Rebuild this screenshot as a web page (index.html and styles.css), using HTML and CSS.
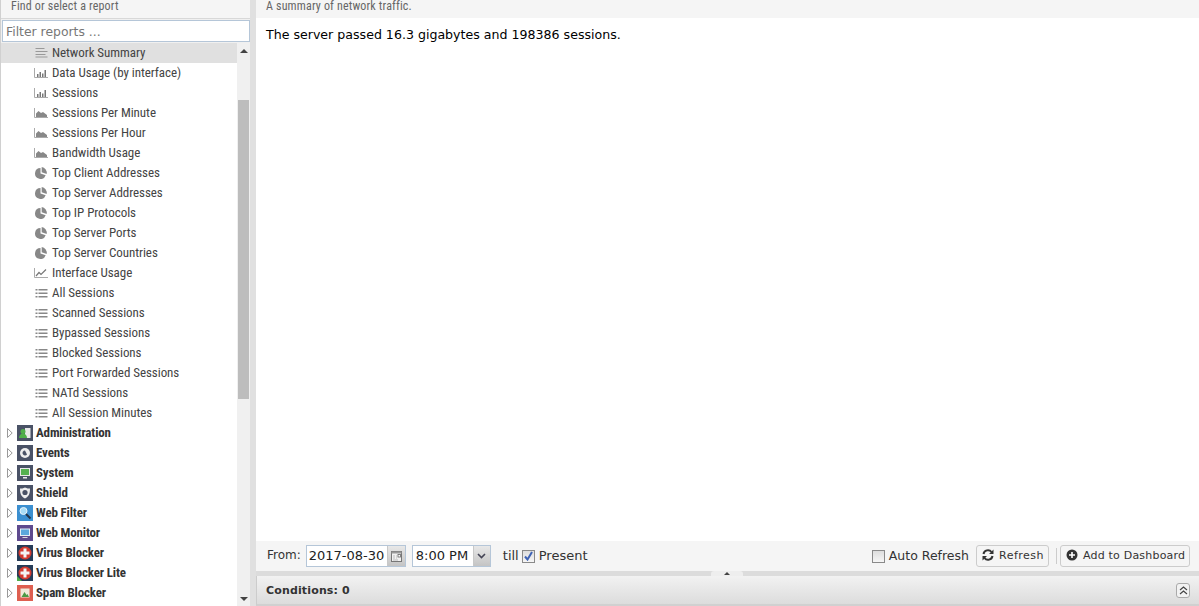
FILE: index.html
```html
<!DOCTYPE html>
<html lang="en">
<head>
<meta charset="utf-8">
<title>Reports</title>
<link rel="stylesheet" href="styles.css">
</head>
<body>
<svg class="defs" width="0" height="0" aria-hidden="true">
  <symbol id="i-lines" viewBox="0 0 14 12"><path d="M1.500 1.500h9M1.500 4.500h12M1.500 7.500h10M1.500 10h12" stroke="#999" stroke-width="1.100" fill="none"/></symbol>
  <symbol id="i-bars" viewBox="0 0 14 12"><path d="M.5 1v9.500H14" stroke="#aaa" fill="none"/><path d="M3 7h1.500v3H3zM5.500 5H7v5H5.500zM8 6.500h1.500V10H8zM10.500 3H12v7h-1.500z" fill="#777"/></symbol>
  <symbol id="i-area" viewBox="0 0 14 12"><path d="M.5 1v9.500H14" stroke="#aaa" fill="none"/><path d="M2 10V6.500l2.500-2.500 2.500 2 2-1 4 3v2z" fill="#888"/></symbol>
  <symbol id="i-pie" viewBox="0 0 12 12"><path d="M5.500 1a5.500 5.500 0 1 0 5.200 7.300L5.500 6.500z" fill="#888"/><path d="M6.700 0v5.300l5 1.700A6 6 0 0 0 6.700 0z" fill="#888"/></symbol>
  <symbol id="i-line" viewBox="0 0 14 12"><path d="M.5 1v9.500H14" stroke="#aaa" fill="none"/><path d="M2 9 5 5.500l2 2 5-5" stroke="#777" stroke-width="1.200" fill="none"/></symbol>
  <symbol id="i-list" viewBox="-1.500 -1.500 14 12"><path d="M0 .5h2v1.500H0zM0 4h2v1.500H0zM0 7.500h2V9H0z" fill="#888"/><path d="M3 1.250h9M3 4.750h9M3 8.250h9" stroke="#888" stroke-width="1.300" fill="none"/></symbol>
  <symbol id="i-tw" viewBox="0 0 6 10"><path d="M.5.500 5.200 5 .5 9.500z" fill="#fff" stroke="#999"/></symbol>
</svg>

<div class="app">
  <aside class="side">
    <div class="hint side-hint">Find or select a report</div>
    <div class="filter-wrap"><input class="filter" type="text" placeholder="Filter reports ..."></div>
    <div class="tree-wrap">
      <ul class="tree">
        <li class="row leaf selected"><svg class="ic"><use href="#i-lines"/></svg><span class="lbl">Network Summary</span></li>
        <li class="row leaf"><svg class="ic"><use href="#i-bars"/></svg><span class="lbl">Data Usage (by interface)</span></li>
        <li class="row leaf"><svg class="ic"><use href="#i-bars"/></svg><span class="lbl">Sessions</span></li>
        <li class="row leaf"><svg class="ic"><use href="#i-area"/></svg><span class="lbl">Sessions Per Minute</span></li>
        <li class="row leaf"><svg class="ic"><use href="#i-area"/></svg><span class="lbl">Sessions Per Hour</span></li>
        <li class="row leaf"><svg class="ic"><use href="#i-area"/></svg><span class="lbl">Bandwidth Usage</span></li>
        <li class="row leaf"><svg class="ic"><use href="#i-pie"/></svg><span class="lbl">Top Client Addresses</span></li>
        <li class="row leaf"><svg class="ic"><use href="#i-pie"/></svg><span class="lbl">Top Server Addresses</span></li>
        <li class="row leaf"><svg class="ic"><use href="#i-pie"/></svg><span class="lbl">Top IP Protocols</span></li>
        <li class="row leaf"><svg class="ic"><use href="#i-pie"/></svg><span class="lbl">Top Server Ports</span></li>
        <li class="row leaf"><svg class="ic"><use href="#i-pie"/></svg><span class="lbl">Top Server Countries</span></li>
        <li class="row leaf"><svg class="ic"><use href="#i-line"/></svg><span class="lbl">Interface Usage</span></li>
        <li class="row leaf"><svg class="ic"><use href="#i-list"/></svg><span class="lbl">All Sessions</span></li>
        <li class="row leaf"><svg class="ic"><use href="#i-list"/></svg><span class="lbl">Scanned Sessions</span></li>
        <li class="row leaf"><svg class="ic"><use href="#i-list"/></svg><span class="lbl">Bypassed Sessions</span></li>
        <li class="row leaf"><svg class="ic"><use href="#i-list"/></svg><span class="lbl">Blocked Sessions</span></li>
        <li class="row leaf"><svg class="ic"><use href="#i-list"/></svg><span class="lbl">Port Forwarded Sessions</span></li>
        <li class="row leaf"><svg class="ic"><use href="#i-list"/></svg><span class="lbl">NATd Sessions</span></li>
        <li class="row leaf"><svg class="ic"><use href="#i-list"/></svg><span class="lbl">All Session Minutes</span></li>
        <li class="row group"><svg class="tw"><use href="#i-tw"/></svg>
          <svg class="app-ic" viewBox="0 0 16 16"><rect width="16" height="16" fill="#4a5266"/><path d="M8 3h5.500v10H8z" fill="#e8e8e8"/><circle cx="6" cy="6.500" r="2.500" fill="#4fae4a"/><path d="M2 13c0-3 2-4.500 4-4.500S10 10 10 13z" fill="#4fae4a"/></svg><span class="lbl">Administration</span></li>
        <li class="row group"><svg class="tw"><use href="#i-tw"/></svg>
          <svg class="app-ic" viewBox="0 0 16 16"><rect width="16" height="16" fill="#4a5266"/><circle cx="8" cy="8" r="5" fill="#eee"/><path d="M8 5.500a2.500 2.500 0 1 0 2 4z" fill="#4a5266"/></svg><span class="lbl">Events</span></li>
        <li class="row group"><svg class="tw"><use href="#i-tw"/></svg>
          <svg class="app-ic" viewBox="0 0 16 16"><rect width="16" height="16" fill="#4a5266"/><rect x="3" y="3" width="10" height="8" fill="#e8e8e8"/><rect x="4" y="4" width="8" height="6" fill="#55b04f"/><path d="M6 12h4v1.500H6z" fill="#e8e8e8"/></svg><span class="lbl">System</span></li>
        <li class="row group"><svg class="tw"><use href="#i-tw"/></svg>
          <svg class="app-ic" viewBox="0 0 16 16"><rect width="16" height="16" fill="#4a5266"/><path d="M8 2.500c2 1 3.500 1 5 1 0 5-1 8-5 10-4-2-5-5-5-10 1.500 0 3 0 5-1z" fill="#eee"/><circle cx="8" cy="7.500" r="2.600" fill="#4a5266"/></svg><span class="lbl">Shield</span></li>
        <li class="row group"><svg class="tw"><use href="#i-tw"/></svg>
          <svg class="app-ic" viewBox="0 0 16 16"><rect width="16" height="16" fill="#3b8fd0"/><circle cx="6.500" cy="6" r="3.500" fill="#a9dcf5" stroke="#e8f3fa"/><path d="M9 9l4.500 4.500" stroke="#23344a" stroke-width="2"/></svg><span class="lbl">Web Filter</span></li>
        <li class="row group"><svg class="tw"><use href="#i-tw"/></svg>
          <svg class="app-ic" viewBox="0 0 16 16"><rect width="16" height="16" fill="#5e4a8e"/><rect x="3" y="3.500" width="10" height="7.500" fill="#e6eef5"/><rect x="4" y="4.500" width="8" height="5.500" fill="#5ba7dc"/><path d="M5.500 12h5v1h-5z" fill="#d8d8d8"/></svg><span class="lbl">Web Monitor</span></li>
        <li class="row group"><svg class="tw"><use href="#i-tw"/></svg>
          <svg class="app-ic" viewBox="0 0 16 16"><rect width="16" height="16" fill="#263c58"/><circle cx="8" cy="8" r="6.500" fill="#d33a2f"/><path d="M6.500 3.500h3v3h3v3h-3v3h-3v-3h-3v-3h3z" fill="#f4f4f4"/></svg><span class="lbl">Virus Blocker</span></li>
        <li class="row group"><svg class="tw"><use href="#i-tw"/></svg>
          <svg class="app-ic" viewBox="0 0 16 16"><rect width="16" height="16" fill="#263c58"/><circle cx="8" cy="8" r="6.500" fill="#d33a2f"/><path d="M6.500 3.500h3v3h3v3h-3v3h-3v-3h-3v-3h3z" fill="#f4f4f4"/><path d="M0 11l5 5H0z" fill="#4fae4a"/></svg><span class="lbl">Virus Blocker Lite</span></li>
        <li class="row group"><svg class="tw"><use href="#i-tw"/></svg>
          <svg class="app-ic" viewBox="0 0 16 16"><rect width="16" height="16" fill="#de5f50"/><rect x="3.500" y="3.500" width="9" height="9" fill="#f0ead8"/><path d="M4.500 12l3-5 2 3 1-1 1.500 3z" fill="#4c9a45"/></svg><span class="lbl">Spam Blocker</span></li>
      </ul>
      <div class="scrollbar">
        <span class="arrow arrow-up"></span>
        <span class="thumb"></span>
        <span class="arrow arrow-down"></span>
      </div>
    </div>
  </aside>

  <main class="main">
    <div class="hint main-hint">A summary of network traffic.</div>
    <div class="content">The server passed 16.3 gigabytes and 198386 sessions.</div>
    <div class="toolbar">
      <span class="from tlabel">From:</span>
      <span class="field date-field"><span class="field-value">2017-08-30</span><span class="field-btn date-btn"><svg width="11" height="11" viewBox="0 0 11 11"><rect x=".5" y=".5" width="10" height="10" fill="#f2f2f2" stroke="#777"/><path d="M.5 .5h10v2h-10z" fill="#999"/><path d="M2 5h2M5 5h1M2 7h2M5 7h1M2 9h5" stroke="#bbb"/><rect x="7" y="3.500" width="2.500" height="2.500" fill="#fff" stroke="#666" stroke-width=".8"/></svg></span></span>
      <span class="field time-field"><span class="field-value">8:00 PM</span><span class="field-btn"><svg width="9" height="6" viewBox="0 0 9 6"><path d="M1 1l3.500 3.500L8 1" stroke="#445" stroke-width="1.600" fill="none"/></svg></span></span>
      <span class="till tlabel">till</span>
      <span class="check checked"><svg width="9" height="10" viewBox="0 0 9 10"><path d="M1 5.500l2.500 3L8 1" stroke="#3f63b5" stroke-width="2" fill="none"/></svg></span>
      <span class="present tlabel">Present</span>
      <span class="spacer"></span>
      <span class="check"></span>
      <span class="auto tlabel">Auto Refresh</span>
      <button class="btn btn-refresh" type="button"><svg class="btn-ic" width="12" height="12" viewBox="0 0 12 12"><path d="M1.500 5A4.500 4.500 0 0 1 9.500 3M10.500 7A4.500 4.500 0 0 1 2.500 9" stroke="#333" stroke-width="2" fill="none"/><path d="M11.500 .5v4.500H7zM.5 11.500V7H5z" fill="#333"/></svg>Refresh</button>
      <span class="sep"></span>
      <button class="btn btn-add" type="button"><svg class="btn-ic" width="12" height="12" viewBox="0 0 12 12"><circle cx="6" cy="6" r="5.500" fill="#333"/><path d="M6 3v6M3 6h6" stroke="#fff" stroke-width="1.600"/></svg>Add to Dashboard</button>
    </div>
    <div class="splitter"><span class="collapse"><span class="collapse-arrow"></span></span></div>
    <div class="conditions">
      <span class="cond-title">Conditions: 0</span>
      <span class="cond-toggle"><svg width="9" height="9" viewBox="0 0 9 9"><path d="M1 4l3.500-3L8 4M1 8l3.500-3L8 8" stroke="#444" stroke-width="1.200" fill="none"/></svg></span>
    </div>
  </main>
</div>
</body>
</html>
```
FILE: styles.css
```css
* { box-sizing: border-box; }
html, body { margin: 0; height: 100%; overflow: hidden; }
body { font-family: "DejaVu Sans", sans-serif; font-size: 13px; color: #000; background: #e0e0e0; }
.defs { display: block; height: 0; }
.app { display: flex; height: 606px; gap: 6px; }

.side { width: 250px; flex: none; display: flex; flex-direction: column; background: #fff; border-left: 1px solid #d0d0d0; }
.hint { height: 18px; line-height: 13px; background: #f5f5f5; font-family: "Roboto", sans-serif; font-size: 12px; font-stretch: condensed; letter-spacing: .16px; color: #666; flex: none; }
.side-hint { padding-left: 10px; }
.filter-wrap { height: 25px; padding: 1px 0 1px 1px; background: #f0f0f0; flex: none; border-top: 1px solid #d8d8d8; }
.filter { display: block; width: 248px; height: 22px; border: 1px solid #b5c6d8; padding: 0 3px; font: 12.400px "DejaVu Sans", sans-serif; color: #333; background: #fff; outline: none; }
.filter::placeholder { color: #777; opacity: 1; }

.tree-wrap { flex: 1; min-height: 0; display: flex; overflow: hidden; }
.tree { list-style: none; margin: 0; padding: 0; flex: 1; min-width: 0; overflow: hidden; }
.row { height: 20px; display: flex; align-items: center; font-family: "Roboto", sans-serif; font-size: 13px; font-stretch: condensed; letter-spacing: -.05px; color: #444; white-space: nowrap; }
.lbl { margin-bottom: 2px; }
.leaf { padding-left: 33px; }
.selected { background: #e0e0e0; }
.ic { width: 14px; height: 12px; margin-right: 4px; flex: none; }
.group { padding-left: 6px; font-weight: 700; color: #333; letter-spacing: -.16px; }
.tw { width: 6px; height: 10px; flex: none; margin-right: 4px; }
.app-ic { width: 16px; height: 16px; flex: none; margin-right: 3px; }

.scrollbar { width: 13px; flex: none; background: #f0f0f0; display: flex; flex-direction: column; align-items: center; }
.arrow { width: 0; height: 0; border-left: 4px solid transparent; border-right: 4px solid transparent; flex: none; }
.arrow-up { border-bottom: 4px solid #444; margin-top: 6px; }
.thumb { width: 11px; height: 299px; background: #bdbdbd; margin-top: 47px; flex: none; }
.arrow-down { border-top: 4px solid #444; margin-top: auto; margin-bottom: 5px; }

.main { flex: 1; min-width: 0; display: flex; flex-direction: column; background: #fff; }
.main-hint { padding-left: 10px; }
.content { flex: 1; padding: 8px 10px; line-height: 17px; background: #fff; font-size: 12.600px; }
.toolbar { height: 30px; flex: none; background: #f5f5f5; display: flex; align-items: center; padding: 0 9px 0 11px; font-size: 12.500px; color: #333; }
.tlabel { margin-bottom: 2px; }
.from { margin-right: 5px; font-size: 12px; }
.field { display: inline-flex; height: 22px; border: 1px solid #b5c6d8; background: #fff; justify-content: space-between; font-size: 13px; }
.field-value { padding-left: 2px; line-height: 20px; color: #222; }
.date-field { width: 100px; margin-right: 6px; }
.time-field { width: 79px; }
.time-field .field-value { padding-left: 3px; }
.field-btn { width: 17px; display: flex; align-items: center; justify-content: center; background: linear-gradient(#e8e8e8, #c4c4c4); border-left: 1px solid #c8c8c8; }
.date-btn { width: 18px; }
.till { margin-left: 12px; margin-right: 3px; font-size: 13px; }
.check { width: 13px; height: 13px; border: 1px solid #8a8a8a; background: linear-gradient(#ddd, #f6f6f6); display: inline-flex; align-items: center; justify-content: center; flex: none; }
.present { margin-left: 4px; font-size: 13px; }
.spacer { flex: 1; }
.auto { margin-left: 4px; margin-right: 7px; }
.btn { height: 22px; display: inline-flex; align-items: center; gap: 5px; border: 1px solid #ccc; border-radius: 3px; background: #f5f5f5; font: 11px "DejaVu Sans", sans-serif; letter-spacing: .5px; color: #333; padding: 0 5px 2px; white-space: nowrap; }
.btn-ic { flex: none; }
.btn-refresh { width: 73px; }
.btn-add { width: 130px; letter-spacing: .2px; }
.sep { width: 1px; height: 16px; background: #ccc; margin: 0 3px 0 7px; }

.splitter { height: 5px; flex: none; background: #dcdcdc; display: flex; justify-content: center; padding-right: 1px; }
.collapse { width: 32px; height: 5px; background: #eee; border-radius: 3px 3px 0 0; display: flex; justify-content: center; align-items: center; }
.collapse-arrow { width: 0; height: 0; border-left: 3px solid transparent; border-right: 3px solid transparent; border-bottom: 3px solid #444; }
.conditions { height: 30px; flex: none; display: flex; align-items: center; justify-content: space-between; padding: 0 9px 0 9px; background: linear-gradient(#f2f2f2, #dcdcdc); border-left: 1px solid #ccc; border-bottom: 2px solid #d0d0d0; }
.cond-title { font-size: 11px; font-weight: 700; letter-spacing: .15px; color: #333; }
.cond-toggle { width: 14px; height: 15px; border: 1px solid #aaa; border-radius: 3px; background: #f2f2f2; display: inline-flex; align-items: center; justify-content: center; }
```
